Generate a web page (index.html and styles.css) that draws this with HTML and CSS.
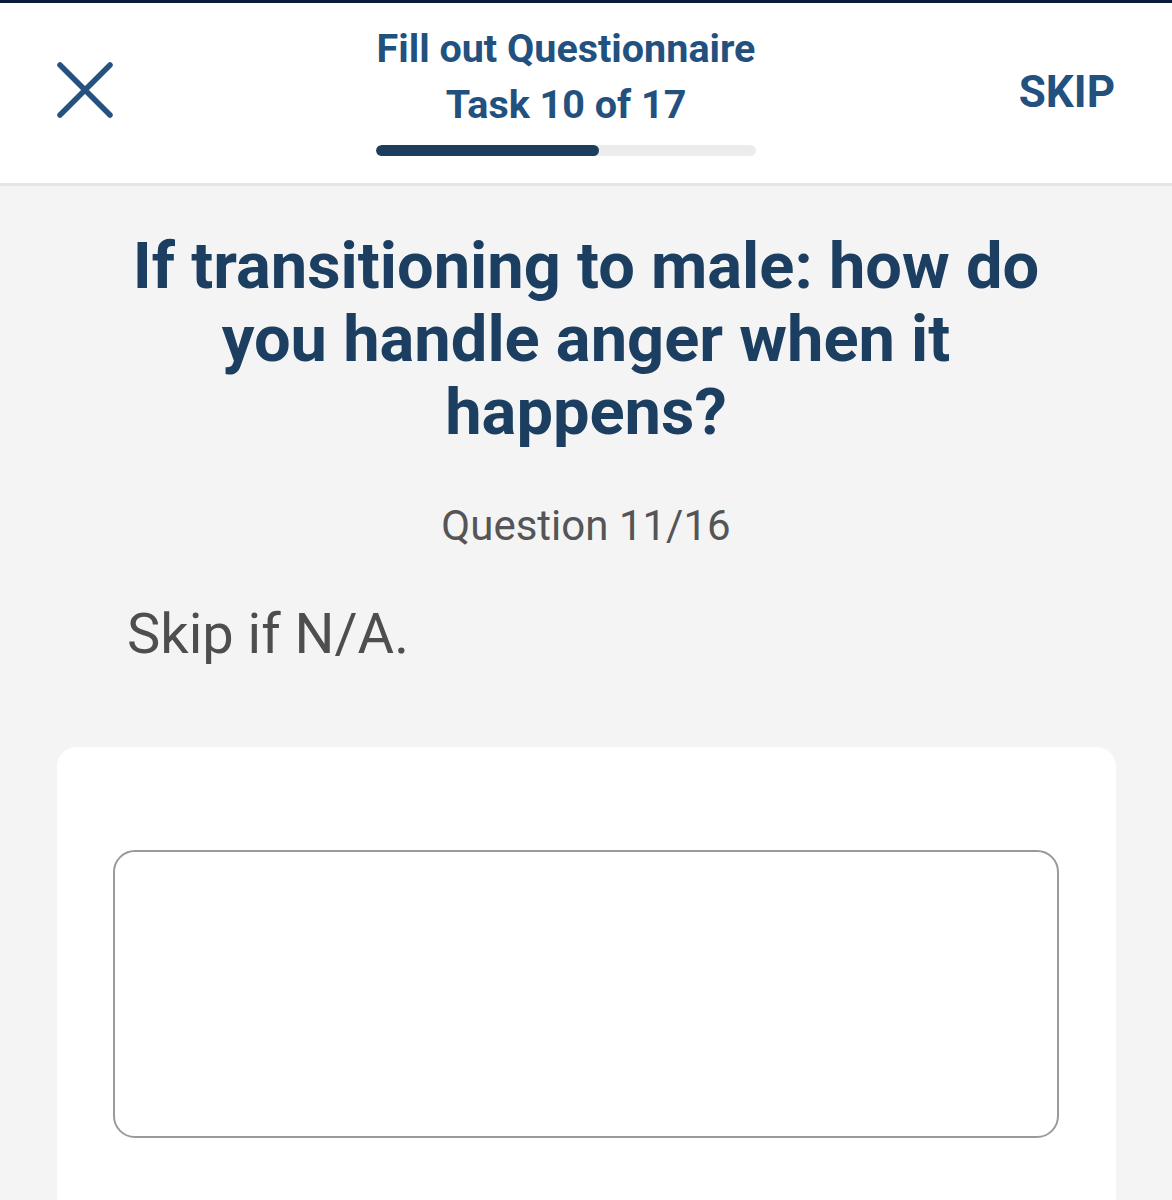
FILE: index.html
```html
<!DOCTYPE html>
<html lang="en">
<head>
<meta charset="utf-8">
<title>Fill out Questionnaire</title>
<link rel="stylesheet" href="styles.css">
</head>
<body>
<div class="topbar"></div>
<header class="header">
  <button class="close" aria-label="Close">
    <svg width="56" height="56" viewBox="0 0 56 56">
      <path d="M3 3 L53 53 M53 3 L3 53" stroke="#25527f" stroke-width="5.5" stroke-linecap="round" fill="none"/>
    </svg>
  </button>
  <div class="progress-block">
    <div class="title">Fill out Questionnaire</div>
    <div class="title">Task 10 of 17</div>
    <div class="track"><div class="fill" style="width:58.8%"></div></div>
  </div>
  <button class="skip">SKIP</button>
</header>
<main class="main">
  <h1 class="question">If transitioning to male: how do you handle anger when it happens?</h1>
  <div class="counter">Question 11/16</div>
  <p class="hint">Skip if N/A.</p>
  <section class="card">
    <textarea class="answer"></textarea>
  </section>
</main>
</body>
</html>
```

FILE: styles.css
```css
* { box-sizing: border-box; }
html, body { margin: 0; padding: 0; }
body {
  font-family: Roboto, "Noto Sans", "Liberation Sans", sans-serif;
  background: #f4f4f4;
  height: 1200px;
  overflow: hidden;
}
.topbar {
  height: 3px;
  background: #0b1a38;
}
.header {
  display: flex;
  align-items: flex-start;
  height: 183px;
  background: #ffffff;
  border-bottom: 3px solid #e5e5e5;
  padding-left: 57px;
  padding-right: 57px;
}
.close {
  margin-top: 59px;
  padding: 0;
  border: 0;
  background: none;
  width: 56px;
  height: 56px;
  display: block;
}
.close svg { display: block; }
.progress-block {
  margin-left: 263px;
  width: 380px;
  padding-top: 18px;
  display: flex;
  flex-direction: column;
  align-items: center;
}
.title {
  font-weight: 700;
  font-size: 39.5px;
  line-height: 56px;
  color: #23517f;
  white-space: nowrap;
}
.track {
  margin-top: 12px;
  width: 380px;
  height: 11px;
  border-radius: 6px;
  background: #ececec;
  overflow: hidden;
}
.fill {
  height: 100%;
  background: #1c3d5e;
  border-radius: 6px;
}
.skip {
  margin-left: auto;
  margin-top: 67px;
  padding: 0;
  border: 0;
  background: none;
  font-family: inherit;
  font-weight: 700;
  font-size: 44px;
  line-height: 44px;
  color: #23517f;
}
.main {
  padding-top: 44px;
}
.question {
  margin: 0;
  padding: 0 100px;
  text-align: center;
  font-weight: 700;
  font-size: 65px;
  line-height: 73px;
  color: #1c3e60;
}
.counter {
  margin-top: 53px;
  text-align: center;
  font-size: 42px;
  line-height: 48px;
  color: #555555;
}
.hint {
  margin: 50px 0 0;
  padding-left: 127px;
  font-size: 56px;
  line-height: 68px;
  color: #4e4e4e;
}
.card {
  margin: 79px 56px 0 57px;
  background: #ffffff;
  border-radius: 20px;
  padding: 103px 57px 80px 56px;
  height: 600px;
}
.answer {
  display: block;
  width: 946px;
  height: 288px;
  border: 2px solid #9a9a9a;
  border-radius: 22px;
  background: #ffffff;
  resize: none;
  outline: none;
}
```
